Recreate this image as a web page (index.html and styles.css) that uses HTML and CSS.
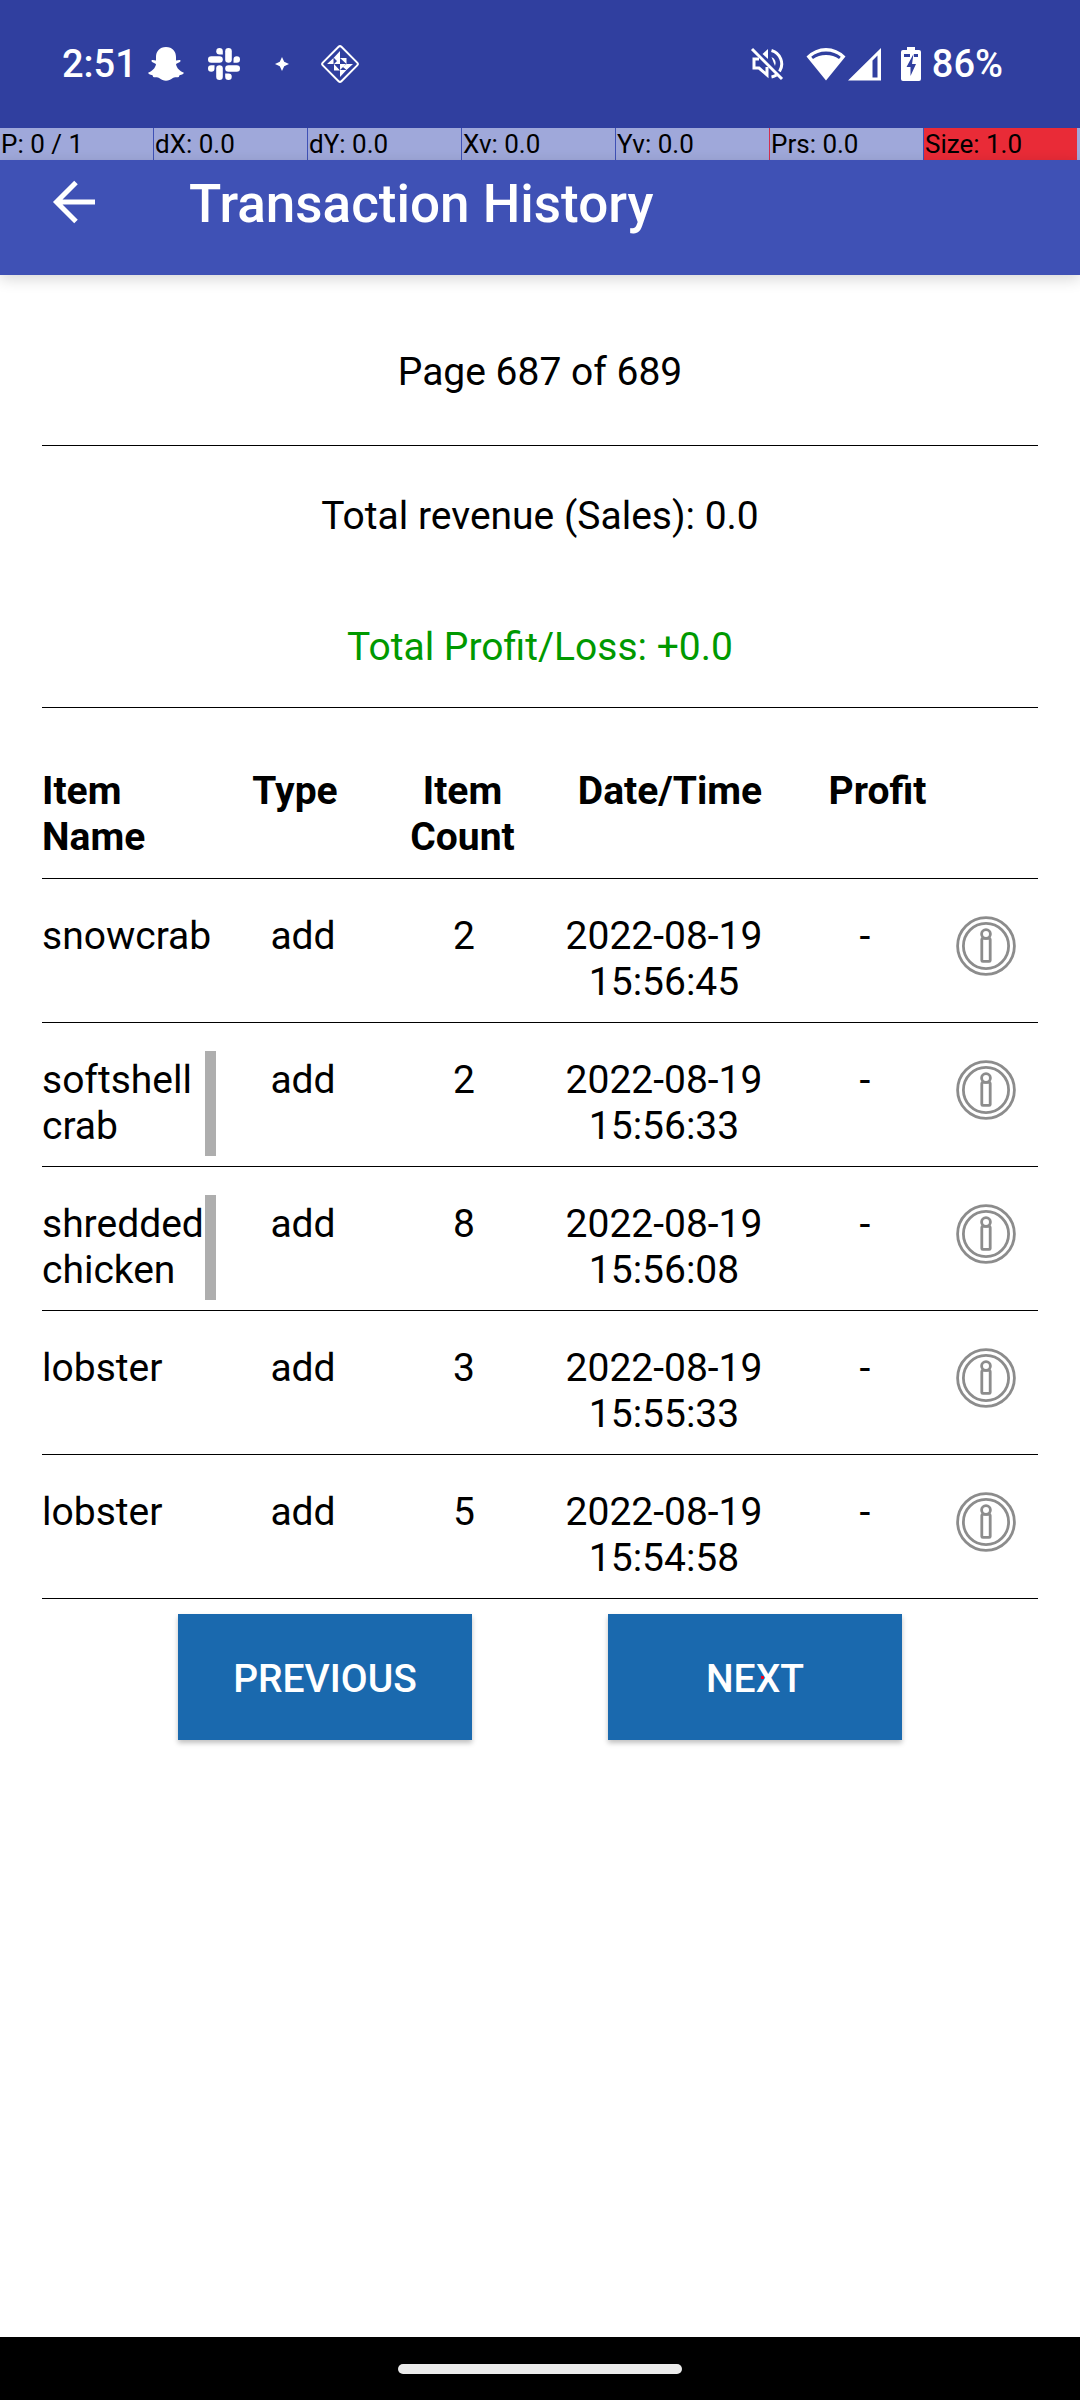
FILE: index.html
```html
<!DOCTYPE html>
<html lang="en">
<head>
<meta charset="utf-8">
<meta name="viewport" content="width=device-width, initial-scale=1">
<title>Transaction History</title>
<link rel="stylesheet" href="styles.css">
</head>
<body>
<svg class="sprite" aria-hidden="true">
  <symbol id="info" viewBox="0 0 60 60">
    <g fill="none" stroke="#8c8c8c" stroke-width="2.8">
      <circle cx="30" cy="30" r="28.4"/>
      <circle cx="30" cy="30" r="22.6"/>
      <circle cx="30" cy="18" r="4.4"/>
      <rect x="25.800" y="22.400" width="8.400" height="23" rx="1"/>
    </g>
  </symbol>
</svg>

<div class="status-bar">
  <div class="status-group">
    <span class="status-text">2:51</span>
    <svg class="snap" width="36" height="34" viewBox="0 0 36 34" fill="#fff"><path d="M18 0C11.500 0 8 4.500 8 10v3.500C6.500 13.500 4.500 12.500 3.500 13.500c-.8 1.300 3 3 4.500 3.500-.5 4-4 7.300-7.500 8.500-1 .8.600 2.200 4 2.700.6 1 .3 2 1.500 2.100 2-.2 4-.3 5.500 1 2 1.500 4 2.500 6.500 2.500s4.500-1 6.500-2.500c1.500-1.300 3.500-1.200 5.500-1 1.200-.1.900-1.100 1.500-2.100 3.400-.5 5-1.900 4-2.700C32 24.300 28.500 21 28 17c1.500-.5 5.300-2.200 4.500-3.500-1-1-3 0-4.500 0V10C28 4.500 24.500 0 18 0z"/></svg>
    <svg class="slack" width="34" height="34" viewBox="0 0 34 34" fill="#fff">
      <g id="arm"><path d="M12.500 1a3.300 3.300 0 0 1 3.300 3.300v3.200h-3.300a3.250 3.250 0 0 1 0-6.500z"/><rect x="1" y="9.200" width="14.800" height="6.600" rx="3.300"/></g>
      <use href="#arm" transform="rotate(90 17 17)"/>
      <use href="#arm" transform="rotate(180 17 17)"/>
      <use href="#arm" transform="rotate(270 17 17)"/>
    </svg>
    <svg class="spark" width="14" height="14" viewBox="0 0 14 14" fill="#fff"><path d="M7 0l2.200 4.800L14 7 9.200 9.200 7 14 4.800 9.200 0 7l4.800-2.200z"/></svg>
    <svg class="gem" width="38" height="38" viewBox="0 0 38 38"><path d="M17.600 1.800a2 2 0 0 1 2.800 0L36.200 17.600a2 2 0 0 1 0 2.800L20.400 36.200a2 2 0 0 1-2.800 0L1.800 20.400a2 2 0 0 1 0-2.800z" fill="none" stroke="#fff" stroke-width="2"/><path fill="#fff" d="M19 6v7h-6.500zM6 19l6.500-6v6zM32 19l-6.500 6v-6zM19 32v-7h6.500zM13 13h6l-3 3zM19 13h6.500v6zM13 19v6.500h6zM25.500 19l-3.500 3 3.500 3zM19 13v6h-6zM19 19h6l-6 6z"/></svg>
  </div>
  <div class="status-group">
    <svg class="mute" width="34" height="34" viewBox="0 0 34 34" fill="none" stroke="#fff"><path d="M2 2l30 30" stroke-width="3"/><path d="M9 12H4v9h5l8 7v-8" stroke-width="3"/><path d="M12.500 7L18 2v10z" fill="#fff" stroke="none"/><path d="M21.500 3.500a14 14 0 0 1 8 21" stroke-width="3"/><path d="M21.500 10a6.500 6.500 0 0 1 3.500 9z" fill="#fff" stroke="none"/><path d="M21.500 30q3-.6 5-2" stroke-width="3"/></svg>
    <svg class="wifi" width="40" height="34" viewBox="0 0 40 34" fill="#fff"><path d="M20 33.500L.5 9.500Q9 1 20 1t19.500 8.500zM20 4.500c-6 0-11 2-14.800 5.200L7 12q5.500-4 13-4t13 4l1.800-2.300C31 6.500 26 4.500 20 4.500z" fill-rule="evenodd"/></svg>
    <svg class="signal" width="34" height="34" viewBox="0 0 34 34" fill="#fff"><path d="M0 33.500L33 1v32.500zM24.500 13.500v17h5v-22z" fill-rule="evenodd"/></svg>
    <svg class="battery" width="20" height="34" viewBox="0 0 20 34"><path d="M6 3V0h8v3h4a2 2 0 0 1 2 2v27a2 2 0 0 1-2 2H2a2 2 0 0 1-2-2V5a2 2 0 0 1 2-2z" fill="#fff"/><path d="M3 7h6v3H3zM13 7h4v3h-4zM12.500 7L5.500 20h4v9l5.500-12h-4z" fill="#303f9f"/></svg>
    <span class="status-text">86%</span>
  </div>
</div>

<div class="pointer-stats">
  <span>P: 0 / 1</span><span>dX: 0.0</span><span>dY: 0.0</span><span>Xv: 0.0</span><span class="before-alert">Yv: 0.0</span><span>Prs: 0.0</span><span class="alert">Size: 1.0</span>
</div>

<header class="app-bar">
  <button class="back" type="button" aria-label="Back"><svg width="44" height="44" viewBox="0 0 44 44" fill="none" stroke="#fff" stroke-width="5"><path d="M43 22H5M24 2.500L4.500 22 24 41.500"/></svg></button>
  <h1>Transaction History</h1>
</header>

<main class="content">
  <p class="page-count">Page 687 of 689</p>
  <section class="totals">
    <p>Total revenue (Sales): 0.0</p>
    <p class="profit">Total Profit/Loss: +0.0</p>
  </section>

  <table class="history">
    <colgroup><col class="c-name"><col class="c-type"><col class="c-count"><col class="c-date"><col class="c-profit"><col class="c-info"></colgroup>
    <thead>
      <tr><th>Item<br>Name</th><th>Type</th><th>Item<br>Count</th><th>Date/Time</th><th>Profit</th><th></th></tr>
    </thead>
    <tbody>
      <tr><td><div class="name">snowcrab</div></td><td>add</td><td>2</td><td>2022-08-19<br>15:56:45</td><td>-</td><td><button class="info" type="button" aria-label="Details"><svg><use href="#info"/></svg></button></td></tr>
      <tr><td><div class="name scroll">softshell crab</div></td><td>add</td><td>2</td><td>2022-08-19<br>15:56:33</td><td>-</td><td><button class="info" type="button" aria-label="Details"><svg><use href="#info"/></svg></button></td></tr>
      <tr><td><div class="name scroll">shredded chicken</div></td><td>add</td><td>8</td><td>2022-08-19<br>15:56:08</td><td>-</td><td><button class="info" type="button" aria-label="Details"><svg><use href="#info"/></svg></button></td></tr>
      <tr><td><div class="name">lobster</div></td><td>add</td><td>3</td><td>2022-08-19<br>15:55:33</td><td>-</td><td><button class="info" type="button" aria-label="Details"><svg><use href="#info"/></svg></button></td></tr>
      <tr><td><div class="name">lobster</div></td><td>add</td><td>5</td><td>2022-08-19<br>15:54:58</td><td>-</td><td><button class="info" type="button" aria-label="Details"><svg><use href="#info"/></svg></button></td></tr>
    </tbody>
  </table>

  <div class="pager">
    <button type="button">PREVIOUS</button>
    <button type="button">NEXT<i class="touch-dot"></i></button>
  </div>
</main>

<div class="nav-bar"><div class="handle"></div></div>
</body>
</html>
```
FILE: styles.css
```css
* { box-sizing: border-box; }

body {
  margin: 0;
  min-height: 100vh;
  display: flex;
  flex-direction: column;
  background: #fff;
  color: #000;
  font-family: Roboto, sans-serif;
  font-size: 39px;
  line-height: 46px;
}

h1, p { margin: 0; font-weight: 400; }
button { border: 0; padding: 0; font: inherit; cursor: pointer; }
svg { display: block; flex: none; }
.sprite { position: absolute; width: 0; height: 0; }

/* Status bar */
.status-bar {
  height: 128px;
  padding: 0 77px 0 62px;
  display: flex;
  justify-content: space-between;
  align-items: center;
  background: #303f9f;
  color: #fff;
}
.status-group { display: flex; align-items: center; }
.status-text { font-size: 38px; font-weight: 500; }
.snap { margin-left: 11px; }
.slack { margin-left: 23px; }
.spark { margin-left: 34px; }
.gem { margin-left: 32px; }
.wifi { margin-left: 22px; }
.signal { margin-left: 2px; }
.battery { margin: 0 11px 0 19px; }

/* Pointer readout strip */
.pointer-stats {
  display: grid;
  grid-template-columns: repeat(7, 1fr);
  border-right: 2px solid #9fa8da;
  background: #3f51b5;
  font-size: 26px;
  line-height: 32px;
}
.pointer-stats span {
  padding-left: 1px;
  border-right: 1px solid #3f51b5;
  background: #9fa8da;
  white-space: nowrap;
}
.pointer-stats .before-alert { border-right-color: #d32f4f; }
.pointer-stats .alert { background: #e92b37; border-right-color: #9fa8da; }

/* App bar */
.app-bar {
  display: flex;
  align-items: center;
  gap: 93px;
  height: 115px;
  padding: 0 52px 28px;
  background: #3f51b5;
  color: #fff;
  box-shadow: 0 4px 14px rgba(0, 0, 0, .16);
}
.app-bar h1 { font-size: 53px; line-height: 64px; font-weight: 500; }
.back { padding-bottom: 4px; background: none; }

/* Content */
.content { flex: 1; padding: 74px 42px 0; }
.page-count, .totals { border-bottom: 1px solid #000; text-align: center; }
.page-count { padding-bottom: 50px; }
.totals { padding: 47px 0 37px; display: grid; gap: 85px; }
.profit { color: #009900; }

.history {
  width: 100%;
  table-layout: fixed;
  border-collapse: separate;
  border-spacing: 0;
}
.c-name, .c-type { width: 174px; }
.c-count { width: 148px; }
.c-date { width: 252px; }
.c-profit { width: 150px; }
.c-info { width: 98px; }

.history th, .history td {
  border-bottom: 1px solid #000;
  vertical-align: top;
  text-align: center;
}
.history th { padding: 60px 0 18px; font-weight: 700; }
.history th:first-child { text-align: left; }
.history th:nth-child(2) { padding-right: 16px; }
.history th:nth-child(3) { padding-right: 3px; }
.history th:nth-child(4) { padding-left: 12px; }
.history th:nth-child(5) { padding-left: 25px; }
.history td { padding: 34px 0 17px; }
.history td:first-child { padding: 28px 0 10px; text-align: left; }
.history td:last-child { padding: 37px 6px 0 0; }

.name { min-height: 105px; padding-top: 6px; }
.name.scroll { border-right: 11px solid #aeaeae; }

.info { display: block; margin: 0 auto; background: none; }
.info svg { width: 60px; height: 60px; }

.pager { display: flex; justify-content: space-evenly; padding: 15px 0; }
.pager button {
  position: relative;
  width: 294px;
  height: 126px;
  padding-top: 3px;
  background: #1a69ae;
  color: #fff;
  font-weight: 500;
  box-shadow: 0 3px 5px rgba(0, 0, 0, .25);
}
.touch-dot {
  position: absolute;
  left: 153px;
  top: 62px;
  width: 3px;
  height: 3px;
  background: #f00020;
}

/* Gesture bar */
.nav-bar {
  height: 63px;
  display: flex;
  align-items: center;
  justify-content: center;
  background: #000;
}
.handle { width: 284px; height: 10px; border-radius: 5px; background: #ebebeb; }
```
